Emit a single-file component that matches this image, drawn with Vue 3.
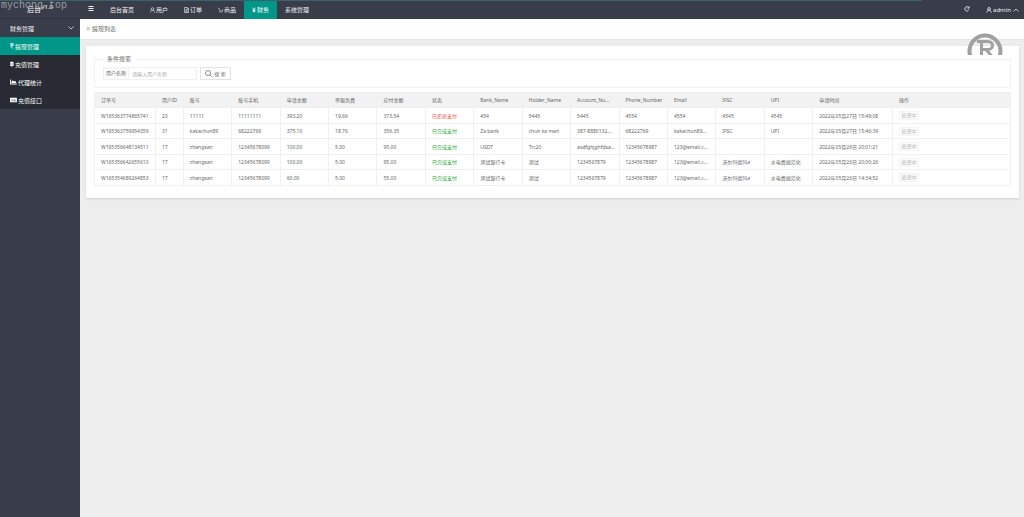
<script setup>
import { ref } from 'vue'

const keyword = ref('')

const navs = [
  { name: '后台首页' },
  { name: '用户', icon: 'user' },
  { name: '订单', icon: 'order' },
  { name: '商品', icon: 'cart' },
  { name: '财务', icon: 'yen', active: true },
  { name: '系统管理' }
]

const menus = [
  { name: '提现管理', icon: 'rupee', active: true },
  { name: '充值管理', icon: 'coin' },
  { name: '代理统计', icon: 'chart' },
  { name: '充值接口', icon: 'card' }
]

const columns = [
  { title: '订单号', width: 61 },
  { title: '用户ID', width: 28 },
  { title: '账号', width: 48.5 },
  { title: '账号手机', width: 48.5 },
  { title: '申请金额', width: 48.5 },
  { title: '单服务费', width: 48.5 },
  { title: '应付金额', width: 48.5 },
  { title: '状态', width: 48.5 },
  { title: 'Bank_Name', width: 48.5 },
  { title: 'Holder_Name', width: 48.5 },
  { title: 'Account_Nu...', width: 48.5 },
  { title: 'Phone_Number', width: 48.5 },
  { title: 'Email', width: 48.5 },
  { title: 'IFSC', width: 48.5 },
  { title: 'UPI', width: 48.5 },
  { title: '申请时间', width: 80 },
  { title: '操作', width: 118 }
]
const total = columns.reduce((sum, c) => sum + c.width, 0)

const rows = [
  ['W165363774865741', '23', '11111', '11111111', '393.20', '19.66', '373.54', '已拒绝支付', '454', '5445', '5445', '4554', '4554', '4545', '4545', '2022年05月27日 15:49:08'],
  ['W165363759954359', '31', 'kakachun89', '68222769', '375.10', '18.76', '356.35', '已完成支付', 'Za bank', 'chun ka man', '387-8880132...', '68222769', 'kakachun89...', 'IFSC', 'UPI', '2022年05月27日 15:46:39'],
  ['W165356648134511', '17', 'zhangsan', '12345678099', '100.00', '5.00', '95.00', '已完成支付', 'USDT', 'Trc20', 'asdfghjghfdsas...', '12345678987', '123@email.c...', '', '', '2022年05月26日 20:01:21'],
  ['W165356642655610', '17', 'zhangsan', '12345678099', '100.00', '5.00', '95.00', '已完成支付', '测试银行卡', '测试', '1234567879', '12345678987', '123@email.c...', '沃尔玛德玛a', '水电费规范化', '2022年05月26日 20:00:26'],
  ['W165354689264853', '17', 'zhangsan', '12345678099', '60.00', '5.00', '55.00', '已完成支付', '测试银行卡', '测试', '1234567879', '12345678987', '123@email.c...', '沃尔玛德玛a', '水电费规范化', '2022年05月26日 14:34:52']
]

const statusClass = (text, i) => {
  if (i !== 7) return ''
  return text === '已拒绝支付' ? 'red' : 'green'
}
</script>

<template>
  <div class="layout">
    <aside class="side">
      <div class="logo">后台<sup>V1.0</sup></div>
      <button class="group" type="button">
        财务管理
        <svg viewBox="0 0 12 8"><path d="M1 1l5 5 5-5" /></svg>
      </button>
      <nav class="menu">
        <a v-for="m in menus" :key="m.name" href="#" :class="{ active: m.active }">
          <svg v-if="m.icon === 'rupee'" class="narrow" viewBox="0 0 8 14"><path class="line" d="M0 2h8M0 5h8M1 2c7-1 7 6 0 6l5 5" /></svg>
          <svg v-else-if="m.icon === 'coin'" class="narrow" viewBox="0 0 10 14"><path fill-rule="evenodd" d="M0 2h3V0h1v2h1V0h1v2c4 0 4 4 2 5 3 1 2 5-2 5v2H5v-2H4v2H3v-2H0v-2h1V4H0zM4 4v2c3 0 3-2 0-2zM4 8v2c4 0 4-2 0-2z" /></svg>
          <svg v-else-if="m.icon === 'chart'" viewBox="0 0 16 14"><path d="M0 1h2v10h14v2H0zM3 10V7l3-4 3 3 3-2 3 6z" /></svg>
          <svg v-else viewBox="0 0 16 14"><path fill-rule="evenodd" d="M0 2h16v10H0zM2 5v1h12V5zM3 8v2h3V8zM8 8v2h5V8z" /></svg>
          {{ m.name }}
        </a>
      </nav>
    </aside>

    <div class="main">
      <header class="top">
        <button class="fold" type="button" aria-label="menu">
          <svg viewBox="0 0 12 12"><path d="M1 1h10M1 5h10M1 9h10" /></svg>
        </button>
        <nav class="navs">
          <a v-for="n in navs" :key="n.name" href="#" :class="{ active: n.active }">
            <svg v-if="n.icon === 'user'" viewBox="1 0 12 14"><circle cx="7" cy="4.5" r="3.2" /><path d="M2 13c0-7 10-7 10 0" /></svg>
            <svg v-else-if="n.icon === 'order'" viewBox="1 0 12 14"><path d="M2 1h7l3 3v9H2zM9 1v3h3M4.5 6h5M4.5 8.5h5M4.5 11h5" /></svg>
            <svg v-else-if="n.icon === 'cart'" viewBox="0 0 14 14"><path d="M0 2h3l2 8h7l1.5-6" /><circle cx="5.5" cy="12.5" r=".8" /><circle cx="11" cy="12.5" r=".8" /></svg>
            <svg v-else-if="n.icon === 'yen'" class="yen" viewBox="0 0 10 14"><path d="M1 1l4 6 4-6M5 7v6M1.5 7.5h7M1.5 10h7" /></svg>
            {{ n.name }}
          </a>
        </nav>
        <div class="tools">
          <button type="button" aria-label="refresh">
            <svg viewBox="0 0 14 14"><path d="M11.5 9A5 5 0 1 1 11 3.5M12 1v4H8" /></svg>
          </button>
          <a href="#">
            <svg viewBox="1 0 12 14"><circle cx="7" cy="4.5" r="3.2" /><path d="M2 13c0-7 10-7 10 0" /></svg>
            admin
            <svg class="caret" viewBox="0 0 12 8"><path d="M1 7l5-5 5 5" /></svg>
          </a>
        </div>
      </header>

      <div class="crumb"><span>»</span>提现列表</div>

      <main class="card">
        <fieldset class="search">
          <legend>条件搜索</legend>
          <form @submit.prevent>
            <div class="field">
              <label for="keyword">用户名称</label>
              <input id="keyword" v-model="keyword" type="text" placeholder="请输入用户名称">
            </div>
            <button type="submit">
              <svg viewBox="0 0 14 14"><circle cx="6" cy="6" r="5" /><path d="M9.5 9.5l4 4" /></svg>
              搜 索
            </button>
          </form>
        </fieldset>

        <table>
          <colgroup>
            <col v-for="c in columns" :key="c.title" :style="{ width: c.width / total * 100 + '%' }">
          </colgroup>
          <thead>
            <tr><th v-for="c in columns" :key="c.title">{{ c.title }}</th></tr>
          </thead>
          <tbody>
            <tr v-for="row in rows" :key="row[0]">
              <td v-for="(cell, i) in row" :key="i" :class="statusClass(cell, i)">{{ cell }}</td>
              <td><button class="done" type="button" disabled>处理中</button></td>
            </tr>
          </tbody>
        </table>
      </main>
    </div>

    <div class="loading"></div>
    <div class="watermark">mychong.top</div>
    <!-- 右上角标记，只露出上半部分 -->
    <svg class="mark" viewBox="0 0 36 22">
      <circle cx="18" cy="18" r="15.5" />
      <path class="letter" d="M10 8.500h11c6 0 6 8 0 8h-5M14.500 8.500v14M19 16.500l6 7" />
    </svg>
  </div>
</template>

<style>
body {
  background: #ededed;
}
</style>

<style scoped>
.layout {
  position: relative;
  display: flex;
  min-height: 100vh;
  font-family: "Noto Sans", "Noto Sans CJK SC", sans-serif;
  font-size: 6px;
  color: #666;
}
* {
  box-sizing: border-box;
}
a {
  color: inherit;
  text-decoration: none;
}
button,
input {
  font-family: inherit;
  font-size: inherit;
  color: inherit;
  padding: 0;
  border: 0;
  background: none;
}
svg {
  width: 6px;
  height: 6px;
  flex: none;
  fill: none;
  stroke: currentColor;
  stroke-width: 1.5;
}

/* 左侧菜单 */
.side {
  width: 80px;
  flex: none;
  background: #393d49;
  color: #f0f0f2;
}
.logo {
  height: 19px;
  line-height: 19px;
  text-align: center;
  font-size: 7px;
  color: #fff;
  border-bottom: 1px solid #31343f;
}
.logo sup {
  font-size: 6px;
  line-height: 1;
}
.group {
  display: flex;
  align-items: center;
  justify-content: space-between;
  width: 100%;
  height: 18px;
  padding: 0 6px 0 10px;
}
.menu {
  background: #282b33;
}
.menu a {
  display: flex;
  align-items: center;
  gap: 1px;
  height: 18px;
  padding-left: 10px;
  color: #fff;
}
.menu a.active {
  background: #009688;
}
.menu svg {
  width: 7px;
  fill: currentColor;
  stroke: none;
}
.menu .narrow {
  width: 4px;
}
.menu .line {
  fill: none;
  stroke: currentColor;
  stroke-width: 2;
}

/* 顶部 */
.main {
  flex: 1;
  min-width: 0;
}
.top {
  display: flex;
  height: 19px;
  background: #393d49;
  color: #f0f0f2;
}
.fold {
  width: 22px;
}
.fold svg {
  stroke-width: 2;
}
.navs {
  display: flex;
}
.navs a {
  display: flex;
  align-items: center;
  gap: 1px;
  padding: 0 8px;
}
.navs a.active {
  background: #009688;
  color: #fff;
}
.navs svg {
  width: 5px;
}
.navs .yen {
  width: 4px;
  stroke-width: 2;
}
.tools {
  display: flex;
  gap: 16px;
  margin-left: auto;
  padding-right: 5px;
}
.tools svg {
  stroke-width: 2;
}
.tools a {
  display: flex;
  align-items: center;
  gap: 1px;
}
.tools .caret {
  margin-left: 1px;
  stroke-width: 1.5;
}
.crumb {
  height: 21px;
  line-height: 20px;
  padding-left: 6px;
  background: #fff;
  border-bottom: 1px solid #e4e4e4;
}
.crumb span {
  margin-right: 2px;
  font-size: 8px;
  line-height: 1;
  color: #aaa;
}

/* 内容 */
.card {
  margin: 6px 5px 0 6px;
  padding: 8px 8px 12px;
  background: #fff;
  box-shadow: 0 1px 2px rgba(0, 0, 0, 0.12);
}
.search {
  margin: 0 0 4px;
  padding: 3px 8px 7px;
  border: 1px solid #f2f2f2;
}
.search legend {
  padding: 0 4px;
  line-height: 10px;
}
.search form {
  display: flex;
  gap: 3px;
  font-size: 5px;
}
.field {
  display: flex;
  width: 94px;
  height: 13px;
  border: 1px solid #f0f0f0;
}
.field label {
  width: 25px;
  line-height: 11px;
  text-align: center;
  background: #fbfbfb;
  border-right: 1px solid #f0f0f0;
}
.field input {
  flex: 1;
  min-width: 0;
  padding-left: 3px;
}
.field input::placeholder {
  color: #aaa;
}
.search button {
  display: flex;
  align-items: center;
  justify-content: center;
  gap: 2px;
  width: 31px;
  height: 13px;
  border: 1px solid #e2e2e2;
}
.search svg {
  width: 7px;
  height: 7px;
}
table {
  width: 100%;
  table-layout: fixed;
  border-collapse: collapse;
  font-size: 5px;
  line-height: 8px;
}
tr {
  height: 16px;
}
thead tr,
tbody tr:nth-child(even) {
  height: 15px;
}
th,
td {
  padding: 0 3px 0 6px;
  border: 1px solid #f0f0f0;
  font-weight: normal;
  text-align: left;
  white-space: nowrap;
  overflow: hidden;
  text-overflow: ellipsis;
}
th {
  background: #f2f2f2;
}
.red {
  color: #f0533f;
}
.green {
  color: #1fa52b;
}
.done {
  display: block;
  width: 20px;
  height: 9px;
  line-height: 7px;
  border: 1px solid #f4f4f4;
  background: #fafafa;
  color: #bbb;
}

/* 顶部加载条 */
.loading {
  position: absolute;
  top: 0;
  left: 0;
  width: 90%;
  height: 1px;
  background: #39626a;
}

/* 水印 */
.watermark {
  position: absolute;
  top: 0;
  left: 1px;
  font: 10px/12px "Liberation Mono", monospace;
  color: #9a9ca3;
}
.mark {
  position: absolute;
  top: 33px;
  right: 21px;
  width: 36px;
  height: 22px;
  color: #a0a0a0;
  stroke-width: 4;
}
.mark .letter {
  stroke-width: 3;
}
</style>
